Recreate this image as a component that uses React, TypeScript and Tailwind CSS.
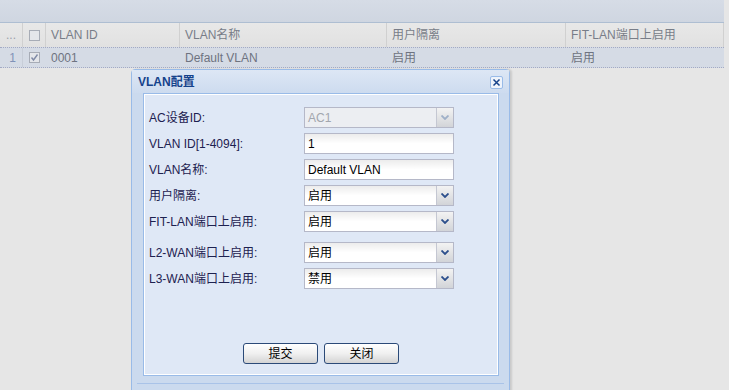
import React from 'react';

const font = { fontFamily: '"Liberation Sans", Tahoma, "Noto Sans CJK SC", sans-serif' };

function Check({ checked }: { checked?: boolean }) {
  return (
    <div className="w-[11px] h-[11px] border border-[#a7acb6] bg-[#e4e6ea] flex items-center justify-center">
      {checked && (
        <svg width="9" height="9" viewBox="0 0 9 9">
          <path d="M1.5 4.5 L3.5 7 L7.5 1.5" fill="none" stroke="#7f8aa6" strokeWidth="1.4" />
        </svg>
      )}
    </div>
  );
}

function Arrow({ faded }: { faded?: boolean }) {
  return (
    <div className="w-[17px] h-full border-l border-[#c4c7d2] bg-gradient-to-b from-[#f3f3f3] to-[#d2d4d8] flex items-center justify-center">
      <svg width="8" height="5" viewBox="0 0 8 5">
        <path d="M0.5 0.5 L4 4 L7.5 0.5" fill="none" stroke={faded ? '#9fb0c8' : '#2c4f8c'} strokeWidth="1.8" />
      </svg>
    </div>
  );
}

function Combo({ value, disabled }: { value: string; disabled?: boolean }) {
  return (
    <div
      className={`w-[150px] h-[21px] border border-[#b5b8c8] flex items-stretch ${
        disabled ? 'bg-[#eceef2]' : 'bg-gradient-to-b from-[#ececec] via-white to-white'
      }`}
    >
      <div className={`flex-1 pl-[3px] flex items-center text-[12px] ${disabled ? 'text-[#a2a6ae]' : 'text-black'}`}>
        {value}
      </div>
      <Arrow faded={disabled} />
    </div>
  );
}

function TextInput({ value }: { value: string }) {
  return (
    <div className="w-[150px] h-[21px] border border-[#b5b8c8] bg-gradient-to-b from-[#ececec] via-white to-white pl-[3px] flex items-center text-[12px] text-black">
      {value}
    </div>
  );
}

function Row({ label, children, top }: { label: string; children: React.ReactNode; top?: string }) {
  return (
    <div className={`flex items-center ${top ?? ''}`}>
      <div className="w-[155px] text-[12px] text-[#1d2150]">{label}</div>
      {children}
    </div>
  );
}

function Button({ label }: { label: string }) {
  return (
    <button className="w-[75px] h-[21px] rounded-[3px] border border-[#2b4a78] bg-gradient-to-b from-white via-[#f0f0f0] to-[#d4d4d4] text-[12px] text-black flex items-center justify-center">
      {label}
    </button>
  );
}

export default function App() {
  const cols = [
    { w: 'w-[134px]', h: 'VLAN ID', v: '0001' },
    { w: 'w-[207px]', h: 'VLAN名称', v: 'Default VLAN' },
    { w: 'w-[179px]', h: '用户隔离', v: '启用' },
    { w: 'w-[158px]', h: 'FIT-LAN端口上启用', v: '启用' },
  ];

  return (
    <div className="relative w-[729px] h-[390px] overflow-hidden bg-[#e6e6e6]" style={font}>
      <div className="w-[724px]">
        {/* toolbar */}
        <div className="h-[23px] bg-gradient-to-b from-[#d6dce6] to-[#cfd6e1] border-b border-[#aebed2]" />

        {/* header */}
        <div className="flex h-[24px] bg-gradient-to-b from-[#e8e8e8] to-[#e1e1e1] text-[12px] text-[#787d88]">
          <div className="w-[23px] border-r border-[#d0d0d0] flex items-center justify-center text-[#9aa0aa]">...</div>
          <div className="w-[23px] border-r border-[#d0d0d0] flex items-center justify-center">
            <Check />
          </div>
          {cols.map((c) => (
            <div key={c.h} className={`${c.w} border-r border-[#d0d0d0] pl-[5px] flex items-center`}>
              {c.h}
            </div>
          ))}
        </div>

        {/* row */}
        <div className="flex h-[21px] bg-[#d5dbe5] border-y border-dotted border-[#a3aac4] text-[12px] text-[#6e7380]">
          <div className="w-[23px] border-r border-[#c8ced8] flex items-center justify-end pr-[6px] text-[#8092b8]">1</div>
          <div className="w-[23px] flex items-center justify-center">
            <Check checked />
          </div>
          {cols.map((c) => (
            <div key={c.h} className={`${c.w} pl-[5px] flex items-center`}>
              {c.v}
            </div>
          ))}
        </div>
      </div>

      {/* dialog */}
      <div className="absolute left-[131px] top-[69px] w-[379px] h-[340px] border border-[#99bbe8] rounded-t-[4px] bg-[#cbdaee] flex flex-col shadow-[2px_0_2px_rgba(0,0,0,0.12)]">
        <div className="h-[23px] flex items-center justify-between pl-[6px] pr-[6px] bg-gradient-to-b from-[#dde7f5] to-[#cddbef]">
          <span className="text-[12px] font-bold text-[#15428b]">VLAN配置</span>
          <div className="w-[13px] h-[13px] mt-[1px] rounded-[2px] border border-[#99bbe8] bg-[#eef3fb] flex items-center justify-center">
            <svg width="9" height="9" viewBox="0 0 9 9">
              <path d="M1.5 1.5 L7.5 7.5 M7.5 1.5 L1.5 7.5" stroke="#15428b" strokeWidth="1.5" />
            </svg>
          </div>
        </div>

        <div className="pl-[11px] pr-[9px]">
          <div className="w-[356px] h-[283px] border border-[#99bbe8] bg-[#dfe8f6]">
            <div className="h-full border border-white flex flex-col pl-[4px] pt-[12px]">
              <div className="flex flex-col gap-[5px]">
                <Row label="AC设备ID:">
                  <Combo value="AC1" disabled />
                </Row>
                <Row label="VLAN ID[1-4094]:">
                  <TextInput value="1" />
                </Row>
                <Row label="VLAN名称:">
                  <TextInput value="Default VLAN" />
                </Row>
                <Row label="用户隔离:">
                  <Combo value="启用" />
                </Row>
                <Row label="FIT-LAN端口上启用:">
                  <Combo value="启用" />
                </Row>
                <Row label="L2-WAN端口上启用:" top="mt-[5px]">
                  <Combo value="启用" />
                </Row>
                <Row label="L3-WAN端口上启用:">
                  <Combo value="禁用" />
                </Row>
              </div>
              <div className="flex gap-[6px] pl-[94px] mt-[54px]">
                <Button label="提交" />
                <Button label="关闭" />
              </div>
            </div>
          </div>
        </div>
        <div className="mt-[7px] mx-[5px] border-t border-[#a9c3e8]" />
      </div>
    </div>
  );
}
